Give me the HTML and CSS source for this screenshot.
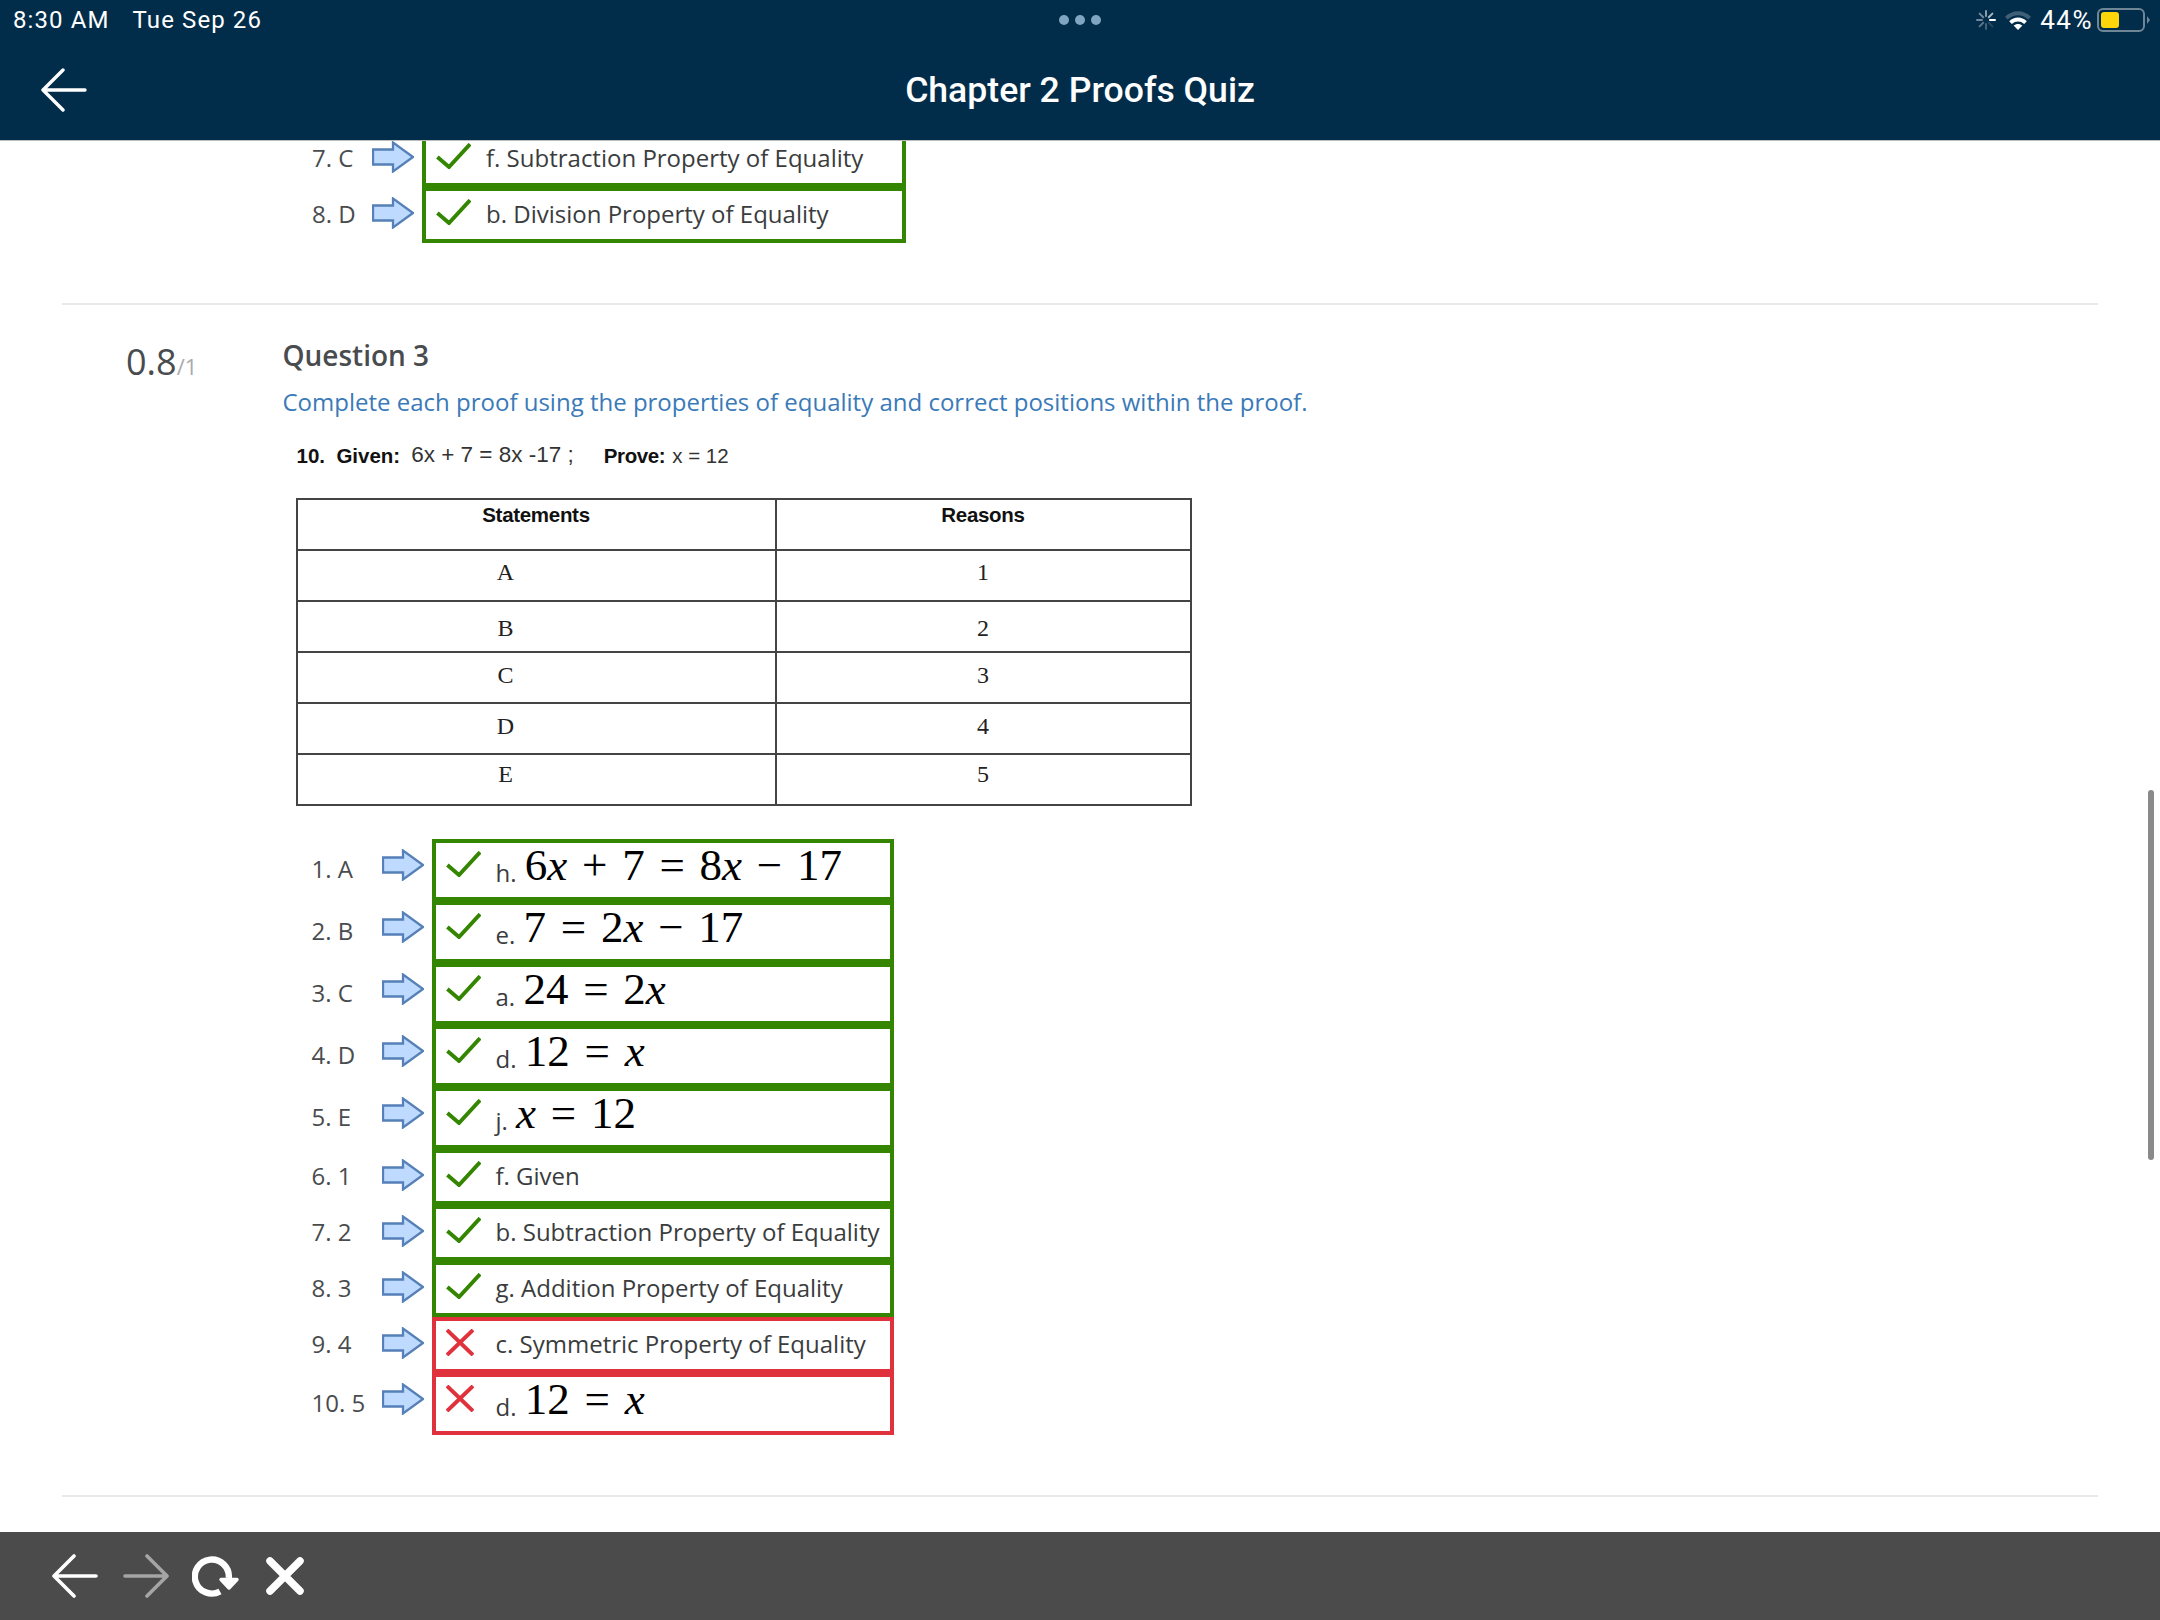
FILE: index.html
```html
<!DOCTYPE html>
<html lang="en">
<head>
<meta charset="utf-8">
<title>Chapter 2 Proofs Quiz</title>
<link rel="stylesheet" href="styles.css">
</head>
<body>
<svg class="defs" width="0" height="0" aria-hidden="true">
  <symbol id="arrow" viewBox="0 0 42 32"><path d="M1 8.5H21V1.5L41 16 21 30.5V23.5H1Z" fill="#bedaff" stroke="#5580b8" stroke-width="2.3" stroke-linejoin="miter"/></symbol>
  <symbol id="check" viewBox="0 0 35 26"><path d="M1.4 14 13 24 34 1.2" fill="none" stroke="#348500" stroke-width="3.9"/></symbol>
  <symbol id="cross" viewBox="0 0 28 27"><path d="M1 1 27 26M27 1 1 26" fill="none" stroke="#e0323c" stroke-width="4"/></symbol>
</svg>
<header class="topbar">
  <div class="status">
    <div class="status-left"><span>8:30 AM</span><span>Tue Sep 26</span></div>
    <div class="dots"><i></i><i></i><i></i></div>
    <div class="status-right">
      <svg class="spinner" width="20" height="20" viewBox="0 0 20 20" fill="none" stroke-width="2" stroke-linecap="round">
        <path d="M14 10H19" stroke="#fff"/><path d="M12.8 7.2 16.4 3.6" stroke="#a9b6c1"/><path d="M10 6V1" stroke="#8a9cab"/><path d="M7.2 7.2 3.6 3.6" stroke="#72899b"/><path d="M6 10H1" stroke="#72899b"/><path d="M7.2 12.8 3.6 16.4" stroke="#5a7488"/><path d="M10 14V19" stroke="#466276"/><path d="M12.8 12.8 16.4 16.4" stroke="#264860"/>
      </svg>
      <svg class="wifi" width="28" height="20" viewBox="0 0 28 20">
        <path d="M1 6.8C8.5 -0.6 19.5 -0.6 27 6.8L24.3 9.6C18.2 3.8 9.8 3.8 3.7 9.6Z" fill="#3e5f76"/>
        <path d="M5.2 11.2C10.4 6.4 17.6 6.4 22.8 11.2L20.2 13.9C16.4 10.6 11.6 10.6 7.8 13.9Z" fill="#fff"/>
        <path d="M9.6 15.5C12.2 13.4 15.8 13.4 18.4 15.5L14 20Z" fill="#fff"/>
      </svg>
      <span class="pct">44%</span>
      <div class="battery"><div class="battery-fill"></div></div>
      <div class="battery-tip"></div>
    </div>
  </div>
  <div class="navrow">
    <svg class="nav-back" width="46" height="44" viewBox="0 0 46 44" fill="none" stroke="#fff" stroke-width="3.4" stroke-linecap="round" stroke-linejoin="round"><path d="M22 2 2 22 22 42M2 22H44"/></svg>
    <h1 class="title">Chapter 2 Proofs Quiz</h1>
  </div>
</header>

<main class="content">
  <div class="matches matches-prev">
    <div class="row row-text"><span class="label">7. C</span><svg class="arrow"><use href="#arrow"/></svg><div class="box"><svg class="check"><use href="#check"/></svg><span class="answer">f. Subtraction Property of Equality</span></div></div>
    <div class="row row-text"><span class="label">8. D</span><svg class="arrow"><use href="#arrow"/></svg><div class="box"><svg class="check"><use href="#check"/></svg><span class="answer">b. Division Property of Equality</span></div></div>
  </div>
  <hr class="divider divider-first">

  <section class="question">
    <div class="score"><span class="score-value">0.8</span><span class="score-total">/1</span></div>
    <div class="question-body">
      <h2 class="question-title">Question 3</h2>
      <p class="prompt">Complete each proof using the properties of equality and correct positions within the proof.</p>
      <p class="given"><b>10.&nbsp; Given:</b><span class="given-eq">6x + 7 = 8x -17 ;</span><b class="prove">Prove:</b><span class="prove-eq">x = 12</span></p>
      <table class="proof">
        <thead><tr class="r-head"><th class="col-s">Statements</th><th class="col-r">Reasons</th></tr></thead>
        <tbody>
          <tr class="r-a"><td class="col-s">A</td><td class="col-r">1</td></tr>
          <tr class="r-b"><td class="col-s">B</td><td class="col-r">2</td></tr>
          <tr class="r-c"><td class="col-s">C</td><td class="col-r">3</td></tr>
          <tr class="r-d"><td class="col-s">D</td><td class="col-r">4</td></tr>
          <tr class="r-e"><td class="col-s">E</td><td class="col-r">5</td></tr>
        </tbody>
      </table>
      <div class="matches matches-main">
        <div class="row row-math"><span class="label">1. A</span><svg class="arrow"><use href="#arrow"/></svg><div class="box"><svg class="check"><use href="#check"/></svg><span class="answer">h. <span class="math"><span>6<i>x</i></span> + 7 = <span>8<i>x</i></span> − 17</span></span></div></div>
        <div class="row row-math"><span class="label">2. B</span><svg class="arrow"><use href="#arrow"/></svg><div class="box"><svg class="check"><use href="#check"/></svg><span class="answer">e. <span class="math">7 = <span>2<i>x</i></span> − 17</span></span></div></div>
        <div class="row row-math"><span class="label">3. C</span><svg class="arrow"><use href="#arrow"/></svg><div class="box"><svg class="check"><use href="#check"/></svg><span class="answer">a. <span class="math">24 = <span>2<i>x</i></span></span></span></div></div>
        <div class="row row-math"><span class="label">4. D</span><svg class="arrow"><use href="#arrow"/></svg><div class="box"><svg class="check"><use href="#check"/></svg><span class="answer">d. <span class="math">12 = <i>x</i></span></span></div></div>
        <div class="row row-math"><span class="label">5. E</span><svg class="arrow"><use href="#arrow"/></svg><div class="box"><svg class="check"><use href="#check"/></svg><span class="answer">j. <span class="math"><i>x</i> = 12</span></span></div></div>
        <div class="row row-text"><span class="label">6. 1</span><svg class="arrow"><use href="#arrow"/></svg><div class="box"><svg class="check"><use href="#check"/></svg><span class="answer">f. Given</span></div></div>
        <div class="row row-text"><span class="label">7. 2</span><svg class="arrow"><use href="#arrow"/></svg><div class="box"><svg class="check"><use href="#check"/></svg><span class="answer">b. Subtraction Property of Equality</span></div></div>
        <div class="row row-text"><span class="label">8. 3</span><svg class="arrow"><use href="#arrow"/></svg><div class="box"><svg class="check"><use href="#check"/></svg><span class="answer">g. Addition Property of Equality</span></div></div>
        <div class="row row-text"><span class="label">9. 4</span><svg class="arrow"><use href="#arrow"/></svg><div class="box box-wrong"><svg class="cross"><use href="#cross"/></svg><span class="answer">c. Symmetric Property of Equality</span></div></div>
        <div class="row row-math"><span class="label">10. 5</span><svg class="arrow"><use href="#arrow"/></svg><div class="box box-wrong"><svg class="cross"><use href="#cross"/></svg><span class="answer">d. <span class="math">12 = <i>x</i></span></span></div></div>
      </div>
    </div>
  </section>
  <hr class="divider divider-last">
  <div class="scrollbar"></div>
</main>

<footer class="toolbar">
  <svg class="tool tool-back" width="46" height="44" viewBox="0 0 46 44" fill="none" stroke="#fff" stroke-width="3.6" stroke-linecap="round" stroke-linejoin="round"><path d="M22 2 2 22 22 42M2 22H44"/></svg>
  <svg class="tool tool-forward" width="46" height="44" viewBox="0 0 46 44" fill="none" stroke="#a5a5a5" stroke-width="3.6" stroke-linecap="round" stroke-linejoin="round"><path d="M24 2 44 22 24 42M2 22H44"/></svg>
  <svg class="tool tool-reload" width="48" height="42" viewBox="0 0 48 42" fill="none"><path d="M36.8 23A17 17 0 1 0 28 36.5" stroke="#fff" stroke-width="6.4"/><path d="M29 24.5H45L37 33Z" fill="#fff" stroke="#fff" stroke-width="3.4" stroke-linejoin="round"/></svg>
  <svg class="tool tool-close" width="40" height="40" viewBox="0 0 40 40" fill="none" stroke="#fff" stroke-width="7.5" stroke-linecap="round"><path d="M5 5 35 35M35 5 5 35"/></svg>
</footer>
</body>
</html>
```

FILE: styles.css
```css
* { box-sizing: border-box; }

html, body { margin: 0; padding: 0; }

body {
  width: 2160px;
  height: 1620px;
  display: flex;
  flex-direction: column;
  overflow: hidden;
  background: #fff;
  color: #494c4e;
  font-family: "Open Sans", sans-serif;
}

.defs { display: block; height: 0; }

/* Top bar */
.topbar {
  flex: none;
  height: 141px;
  background: #022d4a;
  border-bottom: 1px solid #b9bcbf;
  color: #fff;
  display: flex;
  flex-direction: column;
}

.status {
  height: 40px;
  padding: 0 10px;
  display: grid;
  grid-template-columns: 1fr auto 1fr;
  align-items: center;
  font-family: Roboto, sans-serif;
  font-size: 24px;
}

.status-left { display: flex; gap: 23px; letter-spacing: 1.1px; padding-left: 3px; }

.dots { display: flex; gap: 6px; }
.dots i { width: 10px; height: 10px; border-radius: 50%; background: #7fa5c2; }

.status-right { display: flex; align-items: center; justify-content: flex-end; }
.spinner { margin-right: 8px; }
.wifi { margin-right: 8px; }
.pct { font-size: 26px; letter-spacing: 1.5px; margin-right: 4px; }

.battery {
  width: 48px;
  height: 24px;
  border: 2px solid #6f8696;
  border-radius: 6px;
  padding: 2px;
}
.battery-fill { width: 18px; height: 16px; background: #ffd60a; border-radius: 3px; }
.battery-tip {
  width: 0;
  height: 0;
  margin-left: 2px;
  border-left: 3px solid #6f8696;
  border-top: 4px solid transparent;
  border-bottom: 4px solid transparent;
}

.navrow {
  flex: 1;
  display: grid;
  grid-template-columns: 1fr auto 1fr;
  align-items: center;
}
.nav-back { margin-left: 41px; }
.title {
  margin: 0;
  font-family: Roboto, sans-serif;
  font-weight: 500;
  font-size: 35.6px;
  line-height: 44px;
}

/* Scrolled content */
.content {
  flex: 1;
  position: relative;
  overflow: hidden;
  padding: 0 62px;
}

.divider { margin: 0; height: 2px; border: 0; background: #e9e9e9; }
.divider-first { margin-top: 60px; }
.divider-last { margin-top: 60px; }

.question { display: flex; padding-top: 32px; }

.score { width: 220.5px; padding: 1px 0 0 64px; line-height: 48px; }
.score-value { font-size: 36px; }
.score-total { font-size: 22px; color: #a9abad; }

.question-body { flex: 1; }

.question-title {
  margin: 0;
  font-size: 28px;
  font-weight: 600;
  line-height: 36px;
}

.prompt {
  margin: 12px 0 0;
  font-size: 24px;
  line-height: 34px;
  color: #3a7ab8;
}

.given {
  margin: 22px 0 0 14px;
  height: 28px;
  line-height: 28px;
  font-family: "Liberation Sans", sans-serif;
  font-size: 20.5px;
  color: #111;
  white-space: nowrap;
}
.given-eq { margin-left: 11px; color: #333; font-size: 22.5px; vertical-align: 1px; }
.prove { margin-left: 30px; letter-spacing: -0.4px; }
.prove-eq { margin-left: 7px; color: #333; font-size: 20.5px; }

/* Proof table */
.proof {
  margin: 29px 0 0 13px;
  width: 896px;
  table-layout: fixed;
  border-collapse: collapse;
  font-family: "Liberation Serif", serif;
  font-size: 24px;
  line-height: 24px;
  color: #222;
}
.proof th, .proof td {
  border: 2px solid #444;
  vertical-align: top;
  text-align: center;
  font-weight: 400;
}
.proof th {
  font-family: "Liberation Sans", sans-serif;
  font-weight: 700;
  font-size: 20.5px;
  color: #111;
  letter-spacing: -0.3px;
}
.proof .col-s { width: 479px; }
.proof td.col-s { padding-right: 62px; }
.proof tr { height: 51px; }
.r-head th { padding-top: 3px; }
.r-a td { padding-top: 9px; }
.r-b td { padding-top: 14px; }
.r-c td { padding-top: 10px; }
.r-d td { padding-top: 10px; }
.r-e td { padding-top: 7px; }

/* Matching rows */
.matches-main { margin-top: 33px; padding-left: 29px; }
.matches-prev { margin-top: -10px; padding-left: 250px; }

.row { display: flex; }
.row-math { height: 62px; }
.row-text { height: 56px; }

.label {
  width: 70px;
  flex: none;
  align-self: center;
  font-size: 24px;
  line-height: 30px;
  margin-top: -2px;
}
.matches-prev .label { width: 60px; }

.arrow { flex: none; width: 42px; height: 32px; margin: 10px 8px 0 0; }

.box {
  flex: none;
  width: 462px;
  border: 4px solid #348500;
  padding: 8px 0 0 10px;
  display: flex;
  align-items: flex-start;
}
.matches-prev .box { width: 484px; }
.box-wrong { border-color: #e0323c; }

.check { flex: none; width: 35px; height: 26px; margin-right: 15px; }
.cross { flex: none; width: 28px; height: 27px; margin-right: 22px; }

.answer {
  font-size: 24px;
  line-height: 32px;
  white-space: nowrap;
  color: #3a3c3e;
}
.row-text .answer { margin-top: -1px; }
.row-math .answer { margin-top: -2px; }

.math {
  font-family: "Liberation Serif", serif;
  font-size: 45px;
  line-height: 32px;
  color: #000;
  word-spacing: 3.5px;
  margin-left: 2px;
  vertical-align: 2px;
}

.scrollbar {
  position: absolute;
  top: 649px;
  right: 6px;
  width: 6px;
  height: 370px;
  border-radius: 3px;
  background: #8a8a8a;
}

/* Bottom toolbar */
.toolbar {
  flex: none;
  height: 88px;
  background: #4b4b4b;
  display: flex;
  align-items: center;
  padding: 0 0 0 52px;
}
.tool { flex: none; }
.tool-back { margin-right: 25px; }
.tool-forward { margin-right: 23px; }
.tool-reload { margin-right: 25px; }
```
